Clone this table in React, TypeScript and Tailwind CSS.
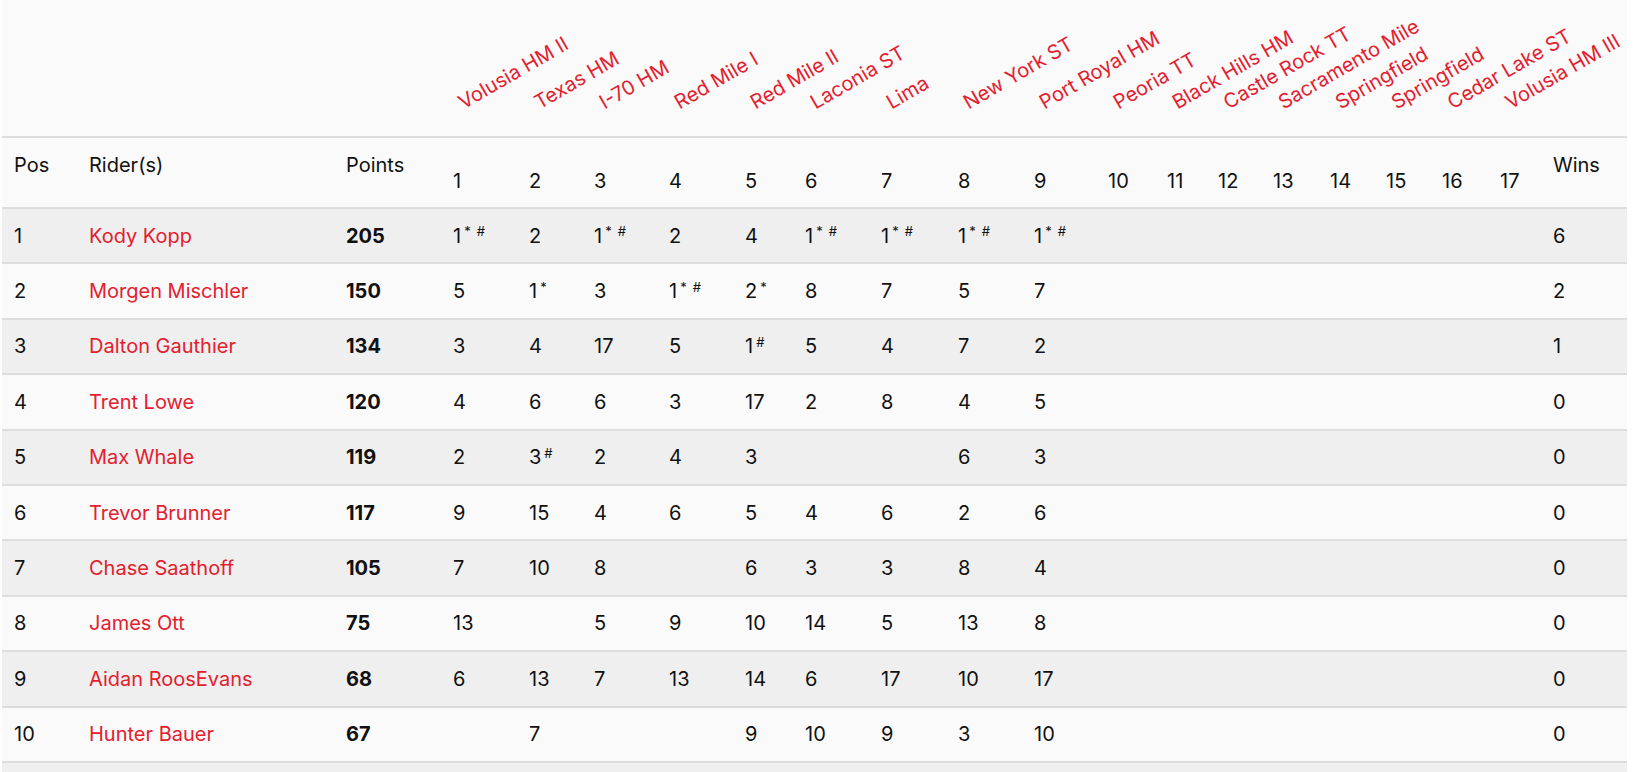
import React from 'react';

// Kolumny tabeli: Pos, Rider, Points, 17 wyscigow, Wins
const GRID =
  'grid grid-cols-[75px_257px_107px_76px_65px_75px_76px_60px_76px_77px_76px_74px_59px_51px_55px_57px_56px_56px_58px_53px_86px]';

const RACES = [
  'Volusia HM II',
  'Texas HM',
  'I-70 HM',
  'Red Mile I',
  'Red Mile II',
  'Laconia ST',
  'Lima',
  'New York ST',
  'Port Royal HM',
  'Peoria TT',
  'Black Hills HM',
  'Castle Rock TT',
  'Sacramento Mile',
  'Springfield',
  'Springfield',
  'Cedar Lake ST',
  'Volusia HM III',
];

interface Rider {
  pos: number;
  name: string;
  points: number;
  results: string[];
  wins: number;
}

// '*' = najszybszy czas, '#' = prowadzenie
const RIDERS: Rider[] = [
  { pos: 1, name: 'Kody Kopp', points: 205, results: ['1*#', '2', '1*#', '2', '4', '1*#', '1*#', '1*#', '1*#'], wins: 6 },
  { pos: 2, name: 'Morgen Mischler', points: 150, results: ['5', '1*', '3', '1*#', '2*', '8', '7', '5', '7'], wins: 2 },
  { pos: 3, name: 'Dalton Gauthier', points: 134, results: ['3', '4', '17', '5', '1#', '5', '4', '7', '2'], wins: 1 },
  { pos: 4, name: 'Trent Lowe', points: 120, results: ['4', '6', '6', '3', '17', '2', '8', '4', '5'], wins: 0 },
  { pos: 5, name: 'Max Whale', points: 119, results: ['2', '3#', '2', '4', '3', '', '', '6', '3'], wins: 0 },
  { pos: 6, name: 'Trevor Brunner', points: 117, results: ['9', '15', '4', '6', '5', '4', '6', '2', '6'], wins: 0 },
  { pos: 7, name: 'Chase Saathoff', points: 105, results: ['7', '10', '8', '', '6', '3', '3', '8', '4'], wins: 0 },
  { pos: 8, name: 'James Ott', points: 75, results: ['13', '', '5', '9', '10', '14', '5', '13', '8'], wins: 0 },
  { pos: 9, name: 'Aidan RoosEvans', points: 68, results: ['6', '13', '7', '13', '14', '6', '17', '10', '17'], wins: 0 },
  { pos: 10, name: 'Hunter Bauer', points: 67, results: ['', '7', '', '', '9', '10', '9', '3', '10'], wins: 0 },
];

function Result({ value }: { value: string }) {
  const place = value.replace(/[*#]/g, '');
  const fast = value.includes('*');
  const led = value.includes('#');
  return (
    <span>
      {place}
      {fast && <sup className="ml-[3px] text-[13px]">*</sup>}
      {led && <sup className={fast ? 'ml-[6px] text-[13px]' : 'ml-[3px] text-[13px]'}>#</sup>}
    </span>
  );
}

export default function App() {
  return (
    <div className="min-h-screen bg-white font-['Inter','Liberation_Sans',sans-serif] text-[20px] leading-6 text-[#111]">
      <div className="ml-[2px] w-[1625px] bg-[#fafafa]">
        {/* Naglowek z nazwami wyscigow */}
        <div className={`${GRID} h-[138px] border-b-2 border-[#dddddd]`}>
          <div className="col-span-3" />
          {RACES.map((race, i) => (
            <div key={i} className="flex items-end pl-[25px] pb-[22px]">
              <span className="block w-max origin-bottom-left -rotate-[30deg] whitespace-nowrap text-[#e4202e]">
                {race}
              </span>
            </div>
          ))}
          <div />
        </div>

        {/* Naglowek kolumn */}
        <div className={`${GRID} h-[71px] border-b-2 border-[#dddddd]`}>
          <div className="pl-3 pt-[15px]">Pos</div>
          <div className="pl-3 pt-[15px]">Rider(s)</div>
          <div className="pl-3 pt-[15px]">Points</div>
          {RACES.map((_, i) => (
            <div key={i} className="flex items-end pl-3 pb-[14px]">
              {i + 1}
            </div>
          ))}
          <div className="pl-3 pt-[15px]">Wins</div>
        </div>

        {/* Wiersze zawodnikow */}
        {RIDERS.map((r, idx) => (
          <div
            key={r.pos}
            className={`${GRID} h-[55.4px] items-center border-b-2 border-[#dddddd] ${
              idx % 2 === 0 ? 'bg-[#efefef]' : 'bg-[#fafafa]'
            }`}
          >
            <div className="pl-3">{r.pos}</div>
            <div className="pl-3 text-[#e4202e]">{r.name}</div>
            <div className="pl-3 font-bold">{r.points}</div>
            {RACES.map((_, i) => (
              <div key={i} className="pl-3">
                {r.results[i] ? <Result value={r.results[i]} /> : null}
              </div>
            ))}
            <div className="pl-3">{r.wins}</div>
          </div>
        ))}
        <div className={`${GRID} h-[55.4px] border-b-2 border-[#dddddd] bg-[#efefef]`} />
      </div>
    </div>
  );
}
